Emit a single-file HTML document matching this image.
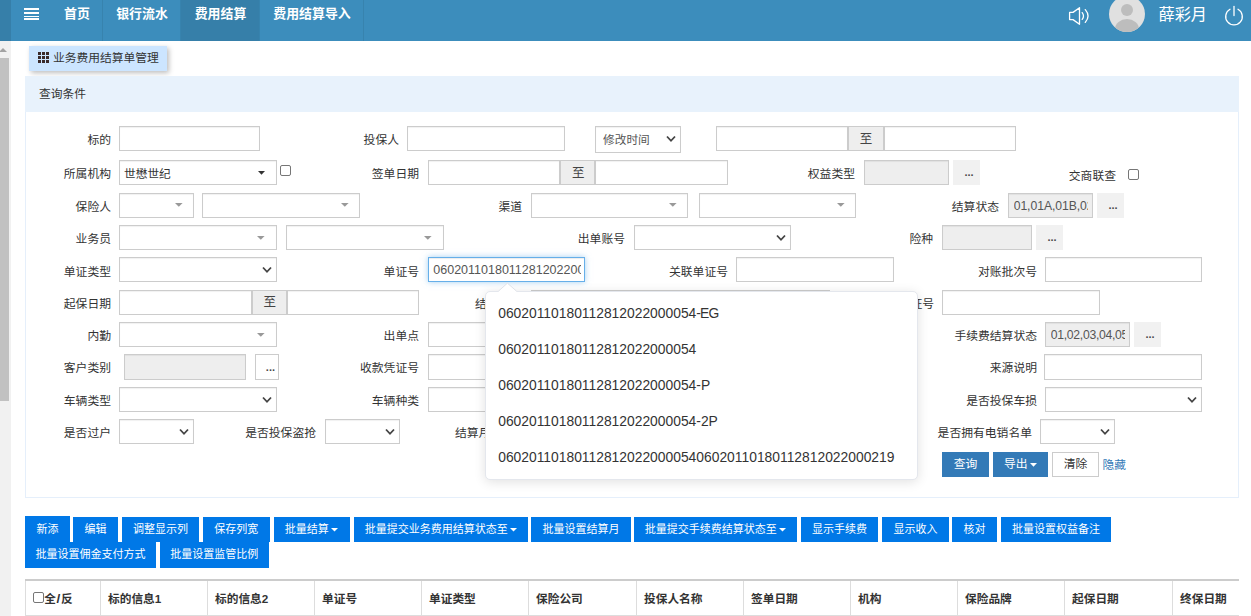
<!DOCTYPE html><html lang="zh"><head><meta charset="utf-8"><title>业务费用结算单管理</title><style>
*{box-sizing:border-box;margin:0;padding:0}
html,body{width:1251px;height:616px;overflow:hidden;background:#fff}
body{font-family:"Liberation Sans","Noto Sans CJK SC",sans-serif;font-size:12px;color:#333;position:relative}
.a{position:absolute}
.nav{left:0;top:0;width:1251px;height:41px;background:#3c8dbc}
.tab{position:absolute;top:0;height:41px;color:#fff;font-weight:bold;font-size:12.9px;line-height:27px;padding-left:1px;text-align:center;border-right:1px solid #3783ae;white-space:nowrap}
.lb{position:absolute;height:24px;line-height:24px;text-align:right;white-space:nowrap;color:#333;font-size:11.8px}
.in{position:absolute;height:25px;border:1px solid #ccc;background:#fff;box-shadow:inset 0 1px 1px rgba(0,0,0,.06)}
.dis{background:#eee}
.ad{position:absolute;height:25px;border:1px solid #ccc;background:#eee;text-align:center;line-height:25.6px;font-size:12.5px;color:#444;padding-left:0px}
.bt{position:absolute;height:25px;background:#f1f1f1;text-align:center;line-height:25px;font-size:11px;color:#4a4a4a;font-weight:bold;padding-left:5px}
.ns svg{position:absolute;right:4.5px;top:8px}
.tx{position:absolute;left:4.7px;right:4px;top:0.5px;line-height:23px;font-size:12.2px;color:#555;white-space:nowrap;overflow:hidden}
.cb{position:absolute;width:11px;height:11px;border:1px solid #767676;border-radius:2px;background:#fff}
.tb{position:absolute;height:26px;background:#0078e7;color:#fff;font-size:11px;line-height:26.5px;text-align:center;white-space:nowrap;overflow:hidden}
.tb svg{margin-left:2.5px;vertical-align:1.5px}
.th{position:absolute;top:581px;height:35px;border-left:1px solid #ddd;border-bottom:1px solid #ddd;font-weight:bold;font-size:11.7px;line-height:36px;padding-left:7px;color:#333;white-space:nowrap}
.pi{position:absolute;left:12.5px;height:36px;line-height:36px;font-size:13.85px;color:#333;white-space:nowrap}
</style></head><body>
<div class="a nav">
<div class="a" style="left:0;top:0;width:11px;height:41px;background:#367fa9"></div>
<div class="a" style="left:24.3px;top:7.9px;width:14.4px;height:2.5px;background:#fff"></div>
<div class="a" style="left:24.3px;top:11.8px;width:14.4px;height:2.5px;background:#fff"></div>
<div class="a" style="left:24.3px;top:15.7px;width:14.4px;height:1.6px;background:#fff"></div>
<div class="a" style="left:24.3px;top:18.1px;width:14.4px;height:2.0px;background:#fff"></div>
<div class="tab" style="left:51px;width:52px">首页</div>
<div class="tab" style="left:103px;width:78px">银行流水</div>
<div class="tab" style="left:181px;width:79px;background:#367fa9">费用结算</div>
<div class="tab" style="left:260px;width:104px">费用结算导入</div>
<svg class="a" style="left:1067px;top:6px" width="24" height="20" viewBox="0 0 24 20" fill="none" stroke="#fff" stroke-width="1.3" stroke-linejoin="round" stroke-linecap="round"><path d="M2.6 6.4 H6 L12.5 1.7 V18.3 L6 13.6 H2.6 Z"/><path d="M15.2 6.6 Q17.8 10 15.2 13.4"/><path d="M18.3 3.6 Q23.8 10 18.3 16.4"/></svg>
<div class="a" style="left:1109px;top:-4px;width:36px;height:36px;border-radius:50%;background:#e0e0e0;overflow:hidden"><div class="a" style="left:12px;top:8px;width:12px;height:12px;border-radius:50%;background:#bdbdbd"></div><div class="a" style="left:6px;top:23px;width:24px;height:20px;border-radius:50%;background:#bdbdbd"></div></div>
<div class="a" style="left:1158.5px;top:1.6px;font-size:16.2px;line-height:24px;color:#fff;white-space:nowrap">薛彩月</div>
<svg class="a" style="left:1224px;top:5px" width="20" height="21" viewBox="0 0 20 21" fill="none" stroke="#fff" stroke-width="1.3" stroke-linecap="round"><path d="M10 1.5 V10.5"/><path d="M6 4.3 A8.3 8.3 0 1 0 14 4.3"/></svg>
</div>
<div class="a" style="left:0;top:41px;width:11px;height:575px;background:#f1f1f1"></div>
<div class="a" style="left:0;top:58px;width:9px;height:343px;background:#c1c1c1"></div>
<div class="a" style="left:-1.4px;top:47.5px;width:0;height:0;border-left:4px solid transparent;border-right:4px solid transparent;border-bottom:4px solid #a3a3a3"></div>
<div class="a" style="left:29px;top:46px;width:138px;height:25px;background:#cce5ff;box-shadow:2px 2px 5px rgba(0,0,0,.26);font-size:11.75px;line-height:24px;color:#333;white-space:nowrap">
<svg class="a" style="left:9px;top:6px" width="11" height="11" viewBox="0 0 11 11" fill="#3a2a2a"><rect x="0" y="0" width="3" height="3"/><rect x="4" y="0" width="3" height="3"/><rect x="8" y="0" width="3" height="3"/><rect x="0" y="4" width="3" height="3"/><rect x="4" y="4" width="3" height="3"/><rect x="8" y="4" width="3" height="3"/><rect x="0" y="8" width="3" height="3"/><rect x="4" y="8" width="3" height="3"/><rect x="8" y="8" width="3" height="3"/></svg>
<span class="a" style="left:24px;top:0">业务费用结算单管理</span></div>
<div class="a" style="left:25px;top:76px;width:1214px;height:422px;border:1px solid #e5effb;background:#fff"></div>
<div class="a" style="left:25px;top:76px;width:1214px;height:36px;background:#e8f2fc"></div>
<div class="a" style="left:39px;top:82px;font-size:11.75px;line-height:24px;color:#333">查询条件</div>
<div class="lb" style="right:1140px;top:127.8px">标的</div>
<div class="in " style="left:119px;top:126px;width:141px"></div>
<div class="lb" style="right:852px;top:127.8px">投保人</div>
<div class="in " style="left:407px;top:126px;width:158px"></div>
<div class="in ns" style="left:595px;top:126px;width:86px;height:27px"><span class="tx" style="left:7px;top:0.8px;font-size:11.7px">修改时间</span><svg width="10" height="8" viewBox="0 0 10 8" fill="none" stroke="#444" stroke-width="1.8"><path d="M1 1.5 L5 5.8 L9 1.5"/></svg></div>
<div class="in " style="left:716px;top:126px;width:132px"></div>
<div class="ad" style="left:848px;top:126px;width:36px;line-height:25.6px;padding-left:0px">至</div>
<div class="in " style="left:884px;top:126px;width:132px"></div>
<div class="lb" style="right:1140px;top:161.8px">所属机构</div>
<div class="in s2" style="left:119px;top:160px;width:158px"><span class="tx" style="color:#333;left:4px;top:0.8px;font-size:11.7px">世懋世纪</span><svg class="a" style="right:11px;top:9.7px" width="7" height="4" viewBox="0 0 7 4"><path d="M0 0H7L3.5 3.7Z" fill="#333"/></svg></div>
<div class="cb" style="left:280px;top:165px"></div>
<div class="lb" style="right:832px;top:161.8px">签单日期</div>
<div class="in " style="left:428px;top:160px;width:132px"></div>
<div class="ad" style="left:560px;top:160px;width:35px;line-height:25.6px;padding-left:1.5px">至</div>
<div class="in " style="left:595px;top:160px;width:133px"></div>
<div class="lb" style="right:396px;top:161.8px">权益类型</div>
<div class="in dis" style="left:864px;top:160px;width:85px"></div>
<div class="bt" style="left:953px;top:160px;width:27px">...</div>
<div class="lb" style="right:135px;top:163.8px">交商联查</div>
<div class="cb" style="left:1128px;top:169px"></div>
<div class="lb" style="right:1140px;top:194.8px">保险人</div>
<div class="in s2" style="left:119px;top:193px;width:75px"><svg class="a" style="right:10px;top:9.0px" width="7.6" height="4" viewBox="0 0 7.6 4"><path d="M0 0H7.6L3.8 3.7Z" fill="#999"/></svg></div>
<div class="in s2" style="left:202px;top:193px;width:158px"><svg class="a" style="right:10px;top:9.0px" width="7.6" height="4" viewBox="0 0 7.6 4"><path d="M0 0H7.6L3.8 3.7Z" fill="#999"/></svg></div>
<div class="lb" style="right:729px;top:194.8px">渠道</div>
<div class="in s2" style="left:531px;top:193px;width:157px"><svg class="a" style="right:10px;top:9.0px" width="7.6" height="4" viewBox="0 0 7.6 4"><path d="M0 0H7.6L3.8 3.7Z" fill="#999"/></svg></div>
<div class="in s2" style="left:699px;top:193px;width:157px"><svg class="a" style="right:10px;top:9.0px" width="7.6" height="4" viewBox="0 0 7.6 4"><path d="M0 0H7.6L3.8 3.7Z" fill="#999"/></svg></div>
<div class="lb" style="right:252px;top:194.8px">结算状态</div>
<div class="in dis" style="left:1008px;top:193px;width:85px"><span class="tx" style="letter-spacing:-0.06px">01,01A,01B,02,03</span></div>
<div class="bt" style="left:1097px;top:193px;width:27px">...</div>
<div class="lb" style="right:1140px;top:226.8px">业务员</div>
<div class="in s2" style="left:119px;top:225px;width:158px"><svg class="a" style="right:11px;top:9.7px" width="7.6" height="4" viewBox="0 0 7.6 4"><path d="M0 0H7.6L3.8 3.7Z" fill="#999"/></svg></div>
<div class="in s2" style="left:286px;top:225px;width:158px"><svg class="a" style="right:11px;top:9.7px" width="7.6" height="4" viewBox="0 0 7.6 4"><path d="M0 0H7.6L3.8 3.7Z" fill="#999"/></svg></div>
<div class="lb" style="right:626px;top:226.8px">出单账号</div>
<div class="in ns" style="left:634px;top:225px;width:157px"><svg width="10" height="8" viewBox="0 0 10 8" fill="none" stroke="#444" stroke-width="1.8"><path d="M1 1.5 L5 5.8 L9 1.5"/></svg></div>
<div class="lb" style="right:318px;top:226.8px">险种</div>
<div class="in dis" style="left:942px;top:225px;width:90px"></div>
<div class="bt" style="left:1036px;top:225px;width:27px">...</div>
<div class="lb" style="right:1140px;top:259.6px">单证类型</div>
<div class="in ns" style="left:119px;top:257px;width:158px"><svg width="10" height="8" viewBox="0 0 10 8" fill="none" stroke="#444" stroke-width="1.8"><path d="M1 1.5 L5 5.8 L9 1.5"/></svg></div>
<div class="lb" style="right:832px;top:259.6px">单证号</div>
<div class="in " style="left:428px;top:257px;width:157px;border-color:#66afe9;box-shadow:inset 0 1px 1px rgba(0,0,0,.075),0 0 6px rgba(102,175,233,.6)"><span class="tx" style="left:4.3px;right:3px;font-size:12.5px">06020110180112812022000054</span></div>
<div class="lb" style="right:523px;top:259.6px">关联单证号</div>
<div class="in " style="left:736px;top:257px;width:158px"></div>
<div class="lb" style="right:214px;top:259.6px">对账批次号</div>
<div class="in " style="left:1045px;top:257px;width:157px"></div>
<div class="lb" style="right:1140px;top:291.8px">起保日期</div>
<div class="in " style="left:119px;top:290px;width:133px"></div>
<div class="ad" style="left:252px;top:290px;width:35px;line-height:23.6px;padding-left:0.5px">至</div>
<div class="in " style="left:287px;top:290px;width:132px"></div>
<div class="lb" style="left:475px;top:291.8px;text-align:left">结算日期</div>
<div class="in " style="left:531px;top:290px;width:132px"></div>
<div class="ad" style="left:663px;top:290px;width:35px;line-height:23.6px;padding-left:0.5px">至</div>
<div class="in " style="left:698px;top:290px;width:132px"></div>
<div class="lb" style="right:317px;top:291.8px">投保单证号</div>
<div class="in " style="left:942px;top:290px;width:158px"></div>
<div class="lb" style="right:1140px;top:323.8px">内勤</div>
<div class="in s2" style="left:119px;top:322px;width:158px"><svg class="a" style="right:11px;top:9.8px" width="7.6" height="4" viewBox="0 0 7.6 4"><path d="M0 0H7.6L3.8 3.7Z" fill="#999"/></svg></div>
<div class="lb" style="right:832px;top:323.8px">出单点</div>
<div class="in " style="left:428px;top:322px;width:157px"></div>
<div class="lb" style="right:214px;top:323.8px">手续费结算状态</div>
<div class="in dis" style="left:1045px;top:322px;width:85px"><span class="tx" style="letter-spacing:-0.28px">01,02,03,04,05,06</span></div>
<div class="bt" style="left:1134px;top:322px;width:27px">...</div>
<div class="lb" style="right:1140px;top:355.8px">客户类别</div>
<div class="in dis" style="left:124px;top:354px;width:122px;height:26px"></div>
<div class="bt" style="left:255px;top:354px;width:24px;height:26px;background:#fff;border:1px solid #ccc;line-height:24px;text-align:right;padding-right:3px">...</div>
<div class="lb" style="right:832px;top:355.8px">收款凭证号</div>
<div class="in " style="left:428px;top:354px;width:157px;height:26px"></div>
<div class="lb" style="right:214px;top:355.8px">来源说明</div>
<div class="in " style="left:1044px;top:354px;width:158px;height:26px"></div>
<div class="lb" style="right:1140px;top:388.8px">车辆类型</div>
<div class="in ns" style="left:119px;top:387px;width:158px"><svg width="10" height="8" viewBox="0 0 10 8" fill="none" stroke="#444" stroke-width="1.8"><path d="M1 1.5 L5 5.8 L9 1.5"/></svg></div>
<div class="lb" style="right:832px;top:388.8px">车辆种类</div>
<div class="in " style="left:428px;top:387px;width:157px"></div>
<div class="lb" style="right:214px;top:388.8px">是否投保车损</div>
<div class="in ns" style="left:1045px;top:387px;width:157px"><svg width="10" height="8" viewBox="0 0 10 8" fill="none" stroke="#444" stroke-width="1.8"><path d="M1 1.5 L5 5.8 L9 1.5"/></svg></div>
<div class="lb" style="right:1140px;top:420.8px">是否过户</div>
<div class="in ns" style="left:119px;top:419px;width:75px"><svg width="10" height="8" viewBox="0 0 10 8" fill="none" stroke="#444" stroke-width="1.8"><path d="M1 1.5 L5 5.8 L9 1.5"/></svg></div>
<div class="lb" style="right:935px;top:420.8px">是否投保盗抢</div>
<div class="in ns" style="left:325px;top:419px;width:75px"><svg width="10" height="8" viewBox="0 0 10 8" fill="none" stroke="#444" stroke-width="1.8"><path d="M1 1.5 L5 5.8 L9 1.5"/></svg></div>
<div class="lb" style="left:455px;top:420.8px;text-align:left">结算月</div>
<div class="in " style="left:495px;top:419px;width:157px"></div>
<div class="lb" style="right:219px;top:420.8px">是否拥有电销名单</div>
<div class="in ns" style="left:1040px;top:419px;width:75px"><svg width="10" height="8" viewBox="0 0 10 8" fill="none" stroke="#444" stroke-width="1.8"><path d="M1 1.5 L5 5.8 L9 1.5"/></svg></div>
<div class="a" style="left:942px;top:452px;width:47px;height:25px;background:#337ab7;color:#fff;text-align:center;line-height:25.4px;font-size:11.8px">查询</div>
<div class="a" style="left:993px;top:452px;width:55px;height:25px;background:#337ab7;color:#fff;text-align:center;line-height:25.4px;font-size:11.8px;padding-left:0px">导出<svg width="7" height="4" viewBox="0 0 7 4" style="margin-left:2.5px;vertical-align:1.5px"><path d="M0 0H7L3.5 3.8Z" fill="#fff"/></svg></div>
<div class="a" style="left:1052px;top:452px;width:47px;height:25px;background:#fff;border:1px solid #ccc;color:#333;text-align:center;line-height:23.4px;font-size:11.8px">清除</div>
<div class="a" style="left:1102.5px;top:452px;height:25px;color:#337ab7;line-height:25px;font-size:11.7px">隐藏</div>
<div class="a" style="left:484.7px;top:290.8px;width:433.6px;height:189.5px;background:#fff;border:1px solid #e4e7ed;border-radius:5px;box-shadow:0 2px 12px rgba(0,0,0,.12)">
<svg class="a" style="left:11.3px;top:-9.5px" width="22" height="11" viewBox="0 0 22 11"><path d="M1.4 9.4 L10.4 1.2 L19.6 9.4 L19.6 10.6 L1.4 10.6 Z" fill="#fff"/><path d="M1.4 9.2 L10.4 1.2 L19.6 9.2" fill="none" stroke="#e0e3e9" stroke-width="1"/></svg>
<div class="pi" style="top:3.2px">06020110180112812022000054<span style="letter-spacing:-0.8px">-EG</span></div>
<div class="pi" style="top:39.2px">06020110180112812022000054</div>
<div class="pi" style="top:75.2px">06020110180112812022000054-P</div>
<div class="pi" style="top:111.2px">06020110180112812022000054-2P</div>
<div class="pi" style="top:147.2px">0602011018011281202200005406020110180112812022000219</div>
</div>
<div class="tb" style="left:25px;top:516px;width:45px;height:26px;line-height:27.5px">新添</div>
<div class="tb" style="left:73px;top:517px;width:45px;height:25px;line-height:25.5px">编辑</div>
<div class="tb" style="left:122px;top:517px;width:77px;height:25px;line-height:25.5px">调整显示列</div>
<div class="tb" style="left:203px;top:517px;width:66.5px;height:25px;line-height:25.5px">保存列宽</div>
<div class="tb" style="left:273.5px;top:517px;width:76.0px;height:25px;line-height:25.5px">批量结算<svg width="7" height="4" viewBox="0 0 7 4"><path d="M0 0H7L3.5 3.6Z" fill="#fff"/></svg></div>
<div class="tb" style="left:354px;top:517px;width:174px;height:25px;line-height:25.5px">批量提交业务费用结算状态至<svg width="7" height="4" viewBox="0 0 7 4"><path d="M0 0H7L3.5 3.6Z" fill="#fff"/></svg></div>
<div class="tb" style="left:531px;top:517px;width:100px;height:25px;line-height:25.5px">批量设置结算月</div>
<div class="tb" style="left:634px;top:517px;width:163px;height:25px;line-height:25.5px">批量提交手续费结算状态至<svg width="7" height="4" viewBox="0 0 7 4"><path d="M0 0H7L3.5 3.6Z" fill="#fff"/></svg></div>
<div class="tb" style="left:801px;top:517px;width:77px;height:25px;line-height:25.5px">显示手续费</div>
<div class="tb" style="left:882px;top:517px;width:67px;height:25px;line-height:25.5px">显示收入</div>
<div class="tb" style="left:952px;top:517px;width:45px;height:25px;line-height:25.5px">核对</div>
<div class="tb" style="left:1001px;top:517px;width:110px;height:25px;line-height:25.5px">批量设置权益备注</div>
<div class="tb" style="left:25px;top:542px;width:131px;height:26px;line-height:25.5px">批量设置佣金支付方式</div>
<div class="tb" style="left:159.5px;top:542px;width:109.5px;height:26px;line-height:25.5px">批量设置监管比例</div>
<div class="a" style="left:25px;top:579px;width:1214px;height:2px;background:#ccc"></div>
<div class="th" style="left:25px;width:75px;padding-left:18.3px"><span class="cb" style="left:7px;top:11px;width:10.5px;height:10.5px"></span>全<span style="padding:0 0.6px;font-size:13.5px;line-height:10px">/</span>反</div>
<div class="th" style="left:100px;width:107px">标的信息1</div>
<div class="th" style="left:207px;width:107px">标的信息2</div>
<div class="th" style="left:314px;width:107px">单证号</div>
<div class="th" style="left:421px;width:107px">单证类型</div>
<div class="th" style="left:528px;width:108px">保险公司</div>
<div class="th" style="left:636px;width:107px">投保人名称</div>
<div class="th" style="left:743px;width:107px">签单日期</div>
<div class="th" style="left:850px;width:107px">机构</div>
<div class="th" style="left:957px;width:107px">保险品牌</div>
<div class="th" style="left:1064px;width:108px">起保日期</div>
<div class="th" style="left:1172px;width:67px">终保日期</div>
</body></html>
